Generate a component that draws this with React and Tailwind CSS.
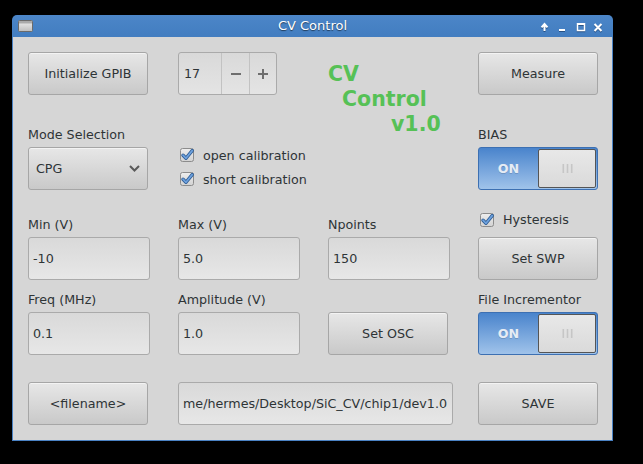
import React from 'react';

const text = "text-[12.7px] text-[#2e3436]";

function Button({ children }) {
    return (
        <div className={`flex h-[43px] w-[120px] items-center justify-center rounded-[3px] border border-[#a6a6a6] bg-linear-to-b from-[#e7e7e7] to-[#c9c9c9] shadow-[inset_0_1px_0_rgba(255,255,255,0.5)] ${text}`}>
            {children}
        </div>
    );
}

function Field({ value, wide }) {
    return (
        <div className={`flex h-[43px] items-center overflow-hidden whitespace-nowrap rounded-[3px] border border-[#aaaaaa] bg-linear-to-b from-[#d9d9d9] to-[#e7e7e7] pl-[4px] ${wide ? 'w-[275px]' : 'w-[122px]'} ${text}`}>
            {value}
        </div>
    );
}

function Label({ children }) {
    return <div className={`h-[20px] leading-[15px] ${text}`}>{children}</div>;
}

function Check({ label }) {
    return (
        <div className={`flex h-[14px] items-center gap-[9px] leading-[15px] ${text}`}>
            <svg width="14" height="14" viewBox="0 0 14 14" className="shrink-0 overflow-visible">
                <defs>
                    <linearGradient id="cbg" x1="0" y1="0" x2="0" y2="1">
                        <stop offset="0" stopColor="#eeeeee" />
                        <stop offset="1" stopColor="#d2d2d2" />
                    </linearGradient>
                </defs>
                <rect x="0.5" y="0.5" width="13" height="13" rx="2" fill="url(#cbg)" stroke="#8c8c8c" />
                <path d="M3 7.2 L6 10.3 L12.2 2.6" fill="none" stroke="#2f5d94" strokeWidth="3.4" strokeLinecap="round" strokeLinejoin="round" />
                <path d="M3 7.2 L6 10.3 L12.2 2.6" fill="none" stroke="#6ea2df" strokeWidth="1.7" strokeLinecap="round" strokeLinejoin="round" />
            </svg>
            <span>{label}</span>
        </div>
    );
}

function Switch() {
    return (
        <div className="flex h-[43px] w-[120px] rounded-[3px] border border-[#3d70b2] bg-linear-to-b from-[#4984cc] to-[#a0c3ea]">
            <div className="flex w-[59px] items-center justify-center text-[12.7px] font-bold text-[#e6ecf4] [text-shadow:0_1px_0_rgba(0,0,0,0.15)]">
                ON
            </div>
            <div className="my-[1px] mr-[1px] flex flex-1 items-center justify-center rounded-[2px] border border-[#555555] bg-linear-to-b from-[#e8e8e8] to-[#dadada]">
                <svg width="11" height="9" viewBox="0 0 11 9">
                    <rect x="0.5" y="0" width="1.6" height="9" fill="#c6c6c6" />
                    <rect x="4.7" y="0" width="1.6" height="9" fill="#c6c6c6" />
                    <rect x="8.9" y="0" width="1.6" height="9" fill="#c6c6c6" />
                </svg>
            </div>
        </div>
    );
}

function SpinBox() {
    return (
        <div className={`flex h-[43px] w-[99px] rounded-[3px] border border-[#aaaaaa] bg-linear-to-b from-[#d9d9d9] to-[#e4e4e4] ${text}`}>
            <div className="flex w-[42px] items-center pl-[5px]">17</div>
            <div className="flex w-[28px] items-center justify-center border-l border-[#c2c2c2]">
                <svg width="10" height="10" viewBox="0 0 10 10">
                    <rect x="0" y="4" width="10" height="2" fill="#6e6e6e" />
                </svg>
            </div>
            <div className="flex flex-1 items-center justify-center border-l border-[#c2c2c2]">
                <svg width="10" height="10" viewBox="0 0 10 10">
                    <rect x="0" y="4" width="10" height="2" fill="#6e6e6e" />
                    <rect x="4" y="0" width="2" height="10" fill="#6e6e6e" />
                </svg>
            </div>
        </div>
    );
}

function Combo() {
    return (
        <div className={`flex h-[43px] w-[120px] items-center justify-between rounded-[3px] border border-[#a6a6a6] bg-linear-to-b from-[#e7e7e7] to-[#c9c9c9] pl-[7px] pr-[7px] shadow-[inset_0_1px_0_rgba(255,255,255,0.5)] ${text}`}>
            <span>CPG</span>
            <svg width="11" height="7" viewBox="0 0 11 7">
                <path d="M1 1 L5.5 5.5 L10 1" fill="none" stroke="#5a5a5a" strokeWidth="2" />
            </svg>
        </div>
    );
}

function TitleBar() {
    return (
        <div className="grid h-[22px] grid-cols-[1fr_auto_1fr] items-center rounded-t-[5px] bg-linear-to-b from-[#4c86c8] to-[#427dc0]">
            <div className="pl-[6px]">
                <svg width="15" height="12" viewBox="0 0 15 12">
                    <defs>
                        <linearGradient id="wic" x1="0" y1="0" x2="0" y2="1">
                            <stop offset="0" stopColor="#f0f0f0" />
                            <stop offset="1" stopColor="#bdbdbd" />
                        </linearGradient>
                    </defs>
                    <rect x="0.5" y="0.5" width="14" height="11" rx="1" fill="url(#wic)" stroke="#6b6b6b" />
                    <rect x="1" y="1" width="13" height="2.5" fill="#a9a9a9" />
                </svg>
            </div>
            <div className="text-[13px] text-white [text-shadow:0_1px_1px_rgba(0,0,0,0.55)]">CV Control</div>
            <div className="flex justify-end pr-[10px]">
                <svg width="63" height="22" viewBox="0 0 63 22" className="drop-shadow-[0_1px_0_rgba(20,50,90,0.6)]">
                    <path d="M4.5 16 L4.5 9.5 M1.5 12.3 L4.5 9 L7.5 12.3" fill="none" stroke="#ffffff" strokeWidth="2" />
                    <rect x="19" y="14" width="6" height="2" fill="#ffffff" />
                    <rect x="37.5" y="8.8" width="7" height="6.7" fill="none" stroke="#ffffff" strokeWidth="1.5" />
                    <rect x="37" y="8" width="8" height="2" fill="#ffffff" />
                    <path d="M54.5 9 L61.5 16 M61.5 9 L54.5 16" stroke="#ffffff" strokeWidth="2" />
                </svg>
            </div>
        </div>
    );
}

export default function App() {
    return (
        <div className="h-[464px] w-[643px] bg-black pl-[12px] pt-[15px] font-['DejaVu_Sans',sans-serif]">
            <div className="w-[601px]">
                <TitleBar />
                <div className="flex h-[404px] flex-col border-x border-b border-[#4a82c4] bg-[#d6d6d6] pl-[15px] pt-[15px]">
                    {/* top block */}
                    <div className="flex">
                        <div className="flex w-[150px] flex-col">
                            <Button>Initialize GPIB</Button>
                            <div className="mt-[32px]">
                                <Label>Mode Selection</Label>
                            </div>
                            <Combo />
                        </div>
                        <div className="flex w-[150px] flex-col">
                            <SpinBox />
                            <div className="ml-[2px] mt-[53px] flex flex-col gap-[10px]">
                                <Check label="open calibration" />
                                <Check label="short calibration" />
                            </div>
                        </div>
                        <div className="w-[150px] pt-[10px] text-[20.5px] font-bold leading-[25px] text-[#56c156]">
                            <div>CV</div>
                            <div className="ml-[14px]">Control</div>
                            <div className="ml-[63px]">v1.0</div>
                        </div>
                        <div className="flex w-[120px] flex-col">
                            <Button>Measure</Button>
                            <div className="mt-[32px]">
                                <Label>BIAS</Label>
                            </div>
                            <Switch />
                        </div>
                    </div>

                    {/* sweep row */}
                    <div className="mt-[27px] flex">
                        <div className="w-[150px]">
                            <Label>Min (V)</Label>
                            <Field value="-10" />
                        </div>
                        <div className="w-[150px]">
                            <Label>Max (V)</Label>
                            <Field value="5.0" />
                        </div>
                        <div className="w-[150px]">
                            <Label>Npoints</Label>
                            <Field value="150" />
                        </div>
                        <div className="w-[120px]">
                            <div className="flex h-[20px] items-start">
                                <div className="ml-[2px] mt-[-4.5px]">
                                    <Check label="Hysteresis" />
                                </div>
                            </div>
                            <Button>Set SWP</Button>
                        </div>
                    </div>

                    {/* osc row */}
                    <div className="mt-[12px] flex">
                        <div className="w-[150px]">
                            <Label>Freq (MHz)</Label>
                            <Field value="0.1" />
                        </div>
                        <div className="w-[150px]">
                            <Label>Amplitude (V)</Label>
                            <Field value="1.0" />
                        </div>
                        <div className="w-[150px] pt-[20px]">
                            <Button>Set OSC</Button>
                        </div>
                        <div className="w-[120px]">
                            <Label>File Incrementor</Label>
                            <Switch />
                        </div>
                    </div>

                    {/* file row */}
                    <div className="mt-[27px] flex">
                        <div className="w-[150px]">
                            <Button>&lt;filename&gt;</Button>
                        </div>
                        <div className="w-[300px]">
                            <Field wide value="me/hermes/Desktop/SiC_CV/chip1/dev1.0" />
                        </div>
                        <div className="w-[120px]">
                            <Button>SAVE</Button>
                        </div>
                    </div>
                </div>
            </div>
        </div>
    );
}
